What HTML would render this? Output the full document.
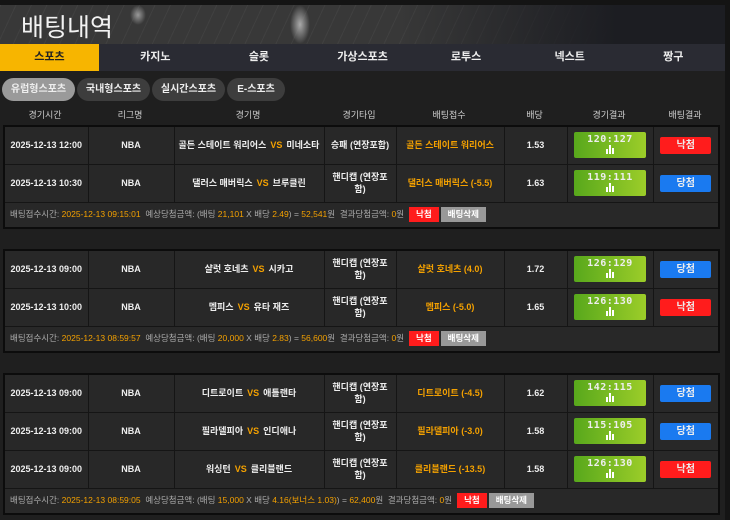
<!DOCTYPE html>
<html><head><meta charset="utf-8"><style>
*{box-sizing:border-box;margin:0;padding:0}
body{width:730px;height:520px;overflow:hidden;background:#141414;font-family:"Liberation Sans","Noto Sans CJK KR",sans-serif;color:#fff;position:relative}
#wrap{position:absolute;left:0;top:0;width:725px;height:520px;background:#1f1f1f}
#hdr{position:absolute;left:0;top:0;width:725px;height:44px;background:#141414}
#img{position:absolute;left:0;top:5px;width:725px;height:39px;background:
linear-gradient(90deg,rgba(28,29,34,0) 0%,rgba(28,29,34,0) 55%,#1c1d22 85%),
repeating-linear-gradient(115deg,#404040 0 1px,#383838 1px 14px),
linear-gradient(180deg,#333,#4a4a4a);}
#img .w1{position:absolute;left:290px;top:0;width:20px;height:39px;background:radial-gradient(#aaa,rgba(200,200,200,0) 70%)}
#img .w2{position:absolute;left:130px;top:0;width:16px;height:20px;background:radial-gradient(#999,rgba(200,200,200,0) 70%)}
#title{position:absolute;left:21px;top:8px;font-size:25px;color:#f2f2f2}
#tabs{position:absolute;left:0;top:44px;width:725px;height:27px;background:#2a2b33;display:flex}
#tabs div{width:103.6px;text-align:center;font-size:11px;line-height:27px;font-weight:bold;color:#eee}
#tabs div.on{background:#f7b500;color:#222;width:99px;margin-right:4.6px}
.pill{position:absolute;top:78px;height:23px;border-radius:12px;background:#3d3d3d;font-size:10px;font-weight:bold;color:#eee;text-align:center;line-height:23px}
.th{position:absolute;top:108px;font-size:9px;color:#ccc;text-align:center}
table{position:absolute;left:3px;width:715px;border-collapse:collapse;border:2px solid #0c0c0c;table-layout:fixed}
td{background:#282828;border:1px solid #151515;font-size:9px;font-weight:bold;text-align:center;color:#eee;line-height:12px}
tr.r td{height:38px}
.o{color:#f4a100}
.vs{color:#f4a100;margin:0 4px}
.res{display:inline-block;width:72px;height:26px;border-radius:2px;background:linear-gradient(90deg,#58a81c,#9ccd29);vertical-align:middle;font-family:"DejaVu Sans Mono","Liberation Mono",monospace;font-size:10px;line-height:11px;letter-spacing:0.5px;padding-top:2px}
.bar{display:inline-block;width:9px;height:9px;position:relative}
.bar i{position:absolute;bottom:0;width:2px;background:#fff}
.st{display:inline-block;width:51px;height:17px;border-radius:2px;line-height:17px;font-size:10px;vertical-align:middle}
.red{background:#ff1c1c}.blue{background:#1a7af0}
td.f{height:26px;text-align:left;padding-left:5px;color:#aaa;font-weight:normal;font-size:8.5px;white-space:nowrap}
td.f b{font-weight:normal}
.bt{display:inline-block;height:15px;line-height:15px;padding:0 7px;font-size:8.5px;font-weight:bold;color:#fff;vertical-align:middle;margin-left:5px}
.gr{background:#999;margin-left:2px}
</style></head><body>
<div id="wrap">
<div id="hdr"><div id="img"><div class="w1"></div><div class="w2"></div></div><div id="title">배팅내역</div></div>
<div id="tabs"><div class="on">스포츠</div><div>카지노</div><div>슬롯</div><div>가상스포츠</div><div>로투스</div><div>넥스트</div><div>짱구</div></div>
<div class="pill" style="left:2px;width:73px;background:#9a9a9a">유럽형스포츠</div>
<div class="pill" style="left:77px;width:73px">국내형스포츠</div>
<div class="pill" style="left:152px;width:73px">실시간스포츠</div>
<div class="pill" style="left:227px;width:58px">E-스포츠</div>
<div class="th" style="left:3px;width:84px">경기시간</div>
<div class="th" style="left:87px;width:86px">리그명</div>
<div class="th" style="left:173px;width:150px">경기명</div>
<div class="th" style="left:323px;width:72px">경기타입</div>
<div class="th" style="left:395px;width:108px">배팅접수</div>
<div class="th" style="left:503px;width:63px">배당</div>
<div class="th" style="left:566px;width:86px">경기결과</div>
<div class="th" style="left:652px;width:66px">배팅결과</div>

<table style="top:125px"><colgroup><col style="width:84px"><col style="width:86px"><col style="width:150px"><col style="width:72px"><col style="width:108px"><col style="width:63px"><col style="width:86px"><col style="width:66px"></colgroup>
<tr class="r"><td>2025-12-13 12:00</td><td>NBA</td><td>골든 스테이트 워리어스<span class="vs">VS</span>미네소타</td><td>승패 (연장포함)</td><td class="o">골든 스테이트 워리어스</td><td>1.53</td><td><span class="res">120:127<br><span class="bar"><i style="left:0;height:5px"></i><i style="left:3px;height:9px"></i><i style="left:6px;height:6px"></i></span></span></td><td><span class="st red">낙첨</span></td></tr>
<tr class="r"><td>2025-12-13 10:30</td><td>NBA</td><td>댈러스 매버릭스<span class="vs">VS</span>브루클린</td><td>핸디캡 (연장포<br>함)</td><td class="o">댈러스 매버릭스 (-5.5)</td><td>1.63</td><td><span class="res">119:111<br><span class="bar"><i style="left:0;height:5px"></i><i style="left:3px;height:9px"></i><i style="left:6px;height:6px"></i></span></span></td><td><span class="st blue">당첨</span></td></tr>
<tr><td colspan="8" class="f">배팅접수시간: <b class="o">2025-12-13 09:15:01</b> &nbsp;예상당첨금액: (배팅 <b class="o">21,101</b> X 배당 <b class="o">2.49</b>) = <b class="o">52,541</b>원 &nbsp;결과당첨금액: <b class="o">0</b>원<span class="bt red">낙첨</span><span class="bt gr">배팅삭제</span></td></tr>
</table>

<table style="top:249px"><colgroup><col style="width:84px"><col style="width:86px"><col style="width:150px"><col style="width:72px"><col style="width:108px"><col style="width:63px"><col style="width:86px"><col style="width:66px"></colgroup>
<tr class="r"><td>2025-12-13 09:00</td><td>NBA</td><td>샬럿 호네츠<span class="vs">VS</span>시카고</td><td>핸디캡 (연장포<br>함)</td><td class="o">샬럿 호네츠 (4.0)</td><td>1.72</td><td><span class="res">126:129<br><span class="bar"><i style="left:0;height:5px"></i><i style="left:3px;height:9px"></i><i style="left:6px;height:6px"></i></span></span></td><td><span class="st blue">당첨</span></td></tr>
<tr class="r"><td>2025-12-13 10:00</td><td>NBA</td><td>멤피스<span class="vs">VS</span>유타 재즈</td><td>핸디캡 (연장포<br>함)</td><td class="o">멤피스 (-5.0)</td><td>1.65</td><td><span class="res">126:130<br><span class="bar"><i style="left:0;height:5px"></i><i style="left:3px;height:9px"></i><i style="left:6px;height:6px"></i></span></span></td><td><span class="st red">낙첨</span></td></tr>
<tr><td colspan="8" class="f">배팅접수시간: <b class="o">2025-12-13 08:59:57</b> &nbsp;예상당첨금액: (배팅 <b class="o">20,000</b> X 배당 <b class="o">2.83</b>) = <b class="o">56,600</b>원 &nbsp;결과당첨금액: <b class="o">0</b>원<span class="bt red">낙첨</span><span class="bt gr">배팅삭제</span></td></tr>
</table>

<table style="top:373px"><colgroup><col style="width:84px"><col style="width:86px"><col style="width:150px"><col style="width:72px"><col style="width:108px"><col style="width:63px"><col style="width:86px"><col style="width:66px"></colgroup>
<tr class="r"><td>2025-12-13 09:00</td><td>NBA</td><td>디트로이트<span class="vs">VS</span>애틀랜타</td><td>핸디캡 (연장포<br>함)</td><td class="o">디트로이트 (-4.5)</td><td>1.62</td><td><span class="res">142:115<br><span class="bar"><i style="left:0;height:5px"></i><i style="left:3px;height:9px"></i><i style="left:6px;height:6px"></i></span></span></td><td><span class="st blue">당첨</span></td></tr>
<tr class="r"><td>2025-12-13 09:00</td><td>NBA</td><td>필라델피아<span class="vs">VS</span>인디애나</td><td>핸디캡 (연장포<br>함)</td><td class="o">필라델피아 (-3.0)</td><td>1.58</td><td><span class="res">115:105<br><span class="bar"><i style="left:0;height:5px"></i><i style="left:3px;height:9px"></i><i style="left:6px;height:6px"></i></span></span></td><td><span class="st blue">당첨</span></td></tr>
<tr class="r"><td>2025-12-13 09:00</td><td>NBA</td><td>워싱턴<span class="vs">VS</span>클리블랜드</td><td>핸디캡 (연장포<br>함)</td><td class="o">클리블랜드 (-13.5)</td><td>1.58</td><td><span class="res">126:130<br><span class="bar"><i style="left:0;height:5px"></i><i style="left:3px;height:9px"></i><i style="left:6px;height:6px"></i></span></span></td><td><span class="st red">낙첨</span></td></tr>
<tr><td colspan="8" class="f">배팅접수시간: <b class="o">2025-12-13 08:59:05</b> &nbsp;예상당첨금액: (배팅 <b class="o">15,000</b> X 배당 <b class="o">4.16(보너스 1.03)</b>) = <b class="o">62,400</b>원 &nbsp;결과당첨금액: <b class="o">0</b>원<span class="bt red">낙첨</span><span class="bt gr">배팅삭제</span></td></tr>
</table>
</div>
</body></html>
